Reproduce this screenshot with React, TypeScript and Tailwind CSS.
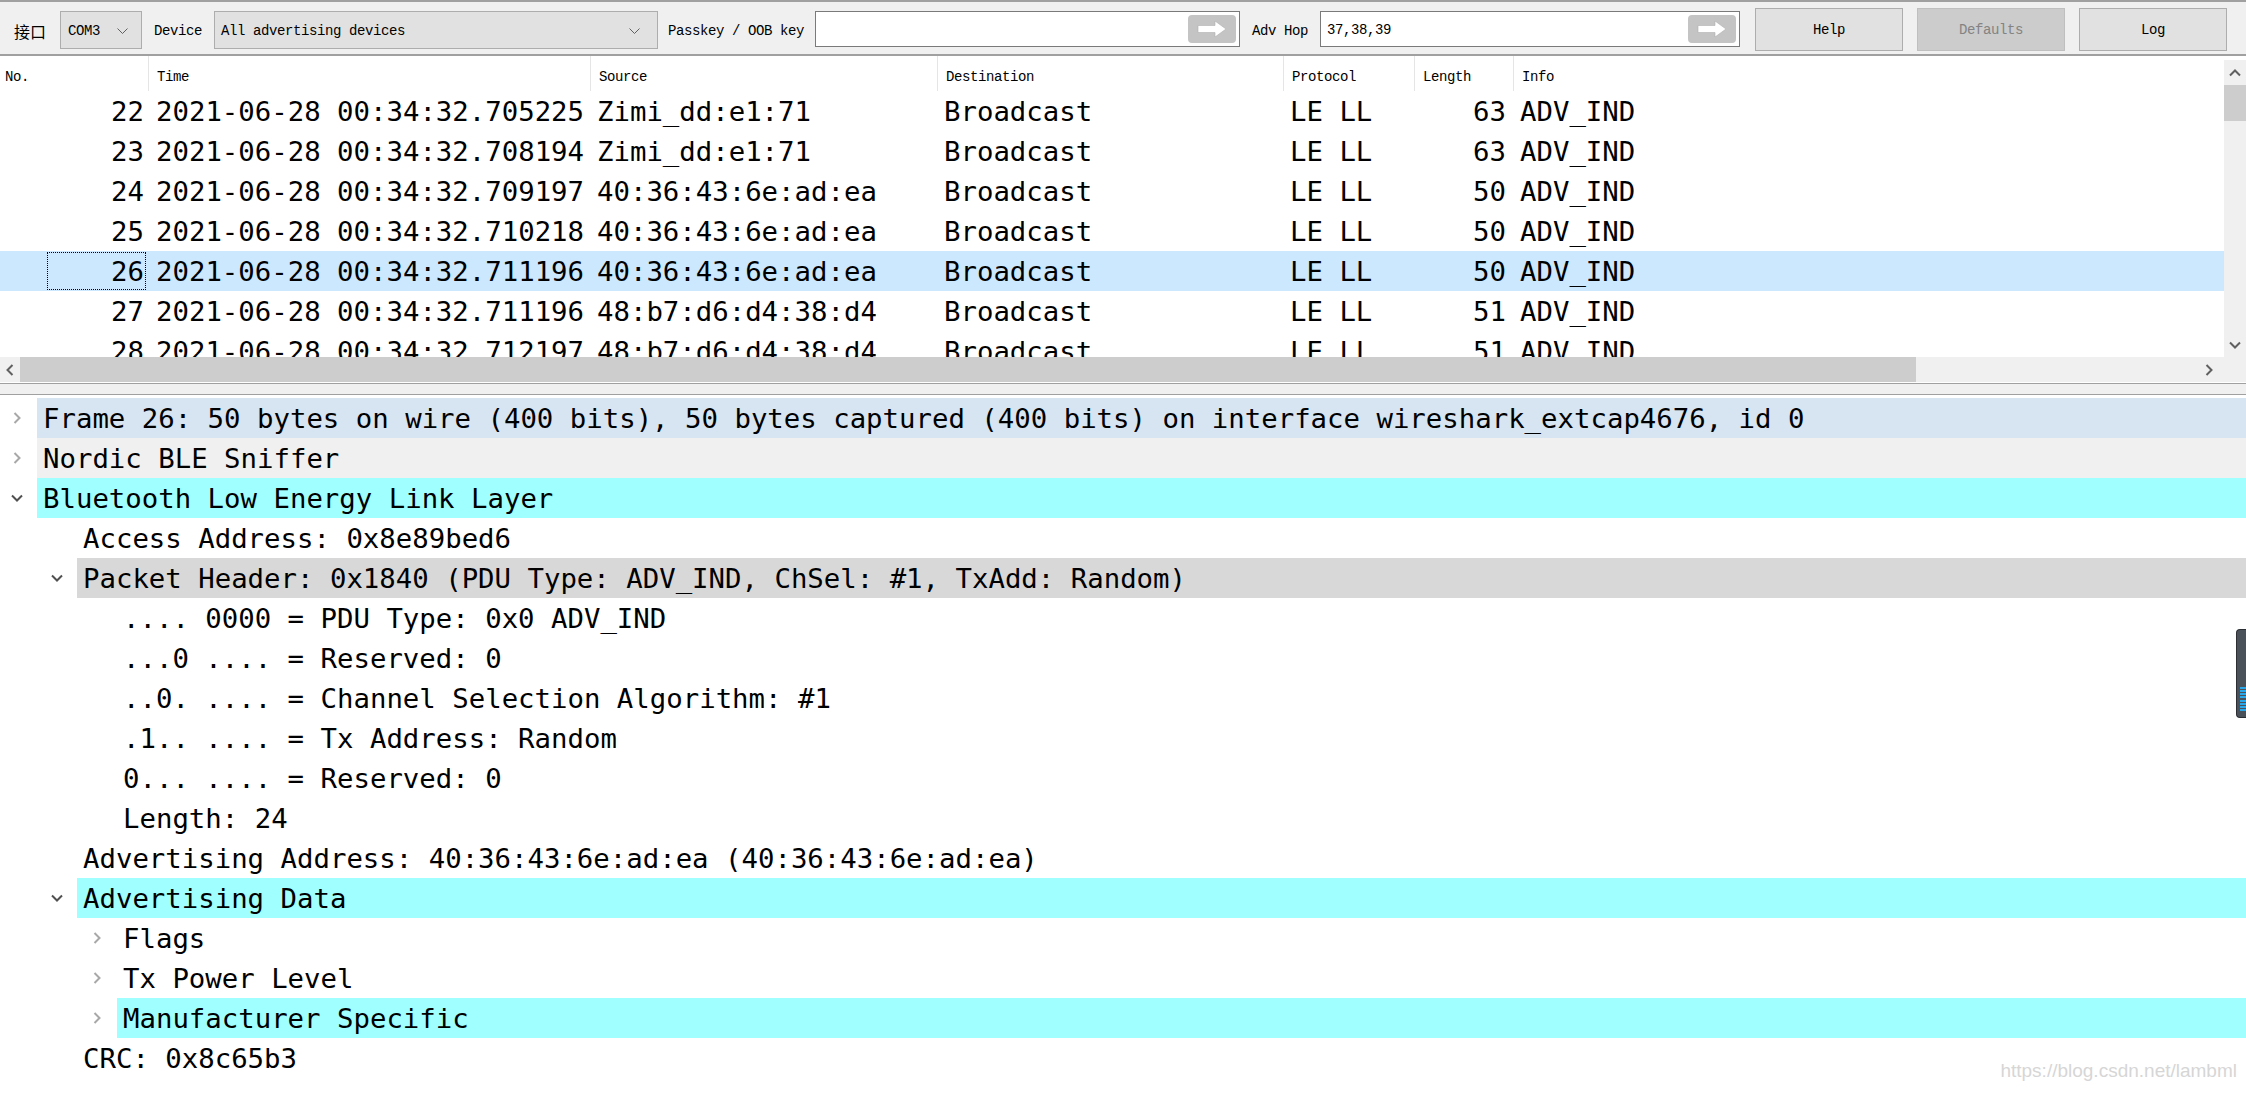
import React from 'react'

type Pkt = { no: number; time: string; src: string; len: number }

const packets: Pkt[] = [
  { no: 22, time: '2021-06-28 00:34:32.705225', src: 'Zimi_dd:e1:71', len: 63 },
  { no: 23, time: '2021-06-28 00:34:32.708194', src: 'Zimi_dd:e1:71', len: 63 },
  { no: 24, time: '2021-06-28 00:34:32.709197', src: '40:36:43:6e:ad:ea', len: 50 },
  { no: 25, time: '2021-06-28 00:34:32.710218', src: '40:36:43:6e:ad:ea', len: 50 },
  { no: 26, time: '2021-06-28 00:34:32.711196', src: '40:36:43:6e:ad:ea', len: 50 },
  { no: 27, time: '2021-06-28 00:34:32.711196', src: '48:b7:d6:d4:38:d4', len: 51 },
  { no: 28, time: '2021-06-28 00:34:32.712197', src: '48:b7:d6:d4:38:d4', len: 51 },
]

type TreeRow = { level: 0 | 1 | 2; text: string; chevron?: 'open' | 'closed'; bg?: string }

const CYAN = 'bg-[#a0ffff]'

const tree: TreeRow[] = [
  { level: 0, text: 'Frame 26: 50 bytes on wire (400 bits), 50 bytes captured (400 bits) on interface wireshark_extcap4676, id 0', chevron: 'closed', bg: 'bg-[#d7e4f1]' },
  { level: 0, text: 'Nordic BLE Sniffer', chevron: 'closed', bg: 'bg-[#f0f0f0]' },
  { level: 0, text: 'Bluetooth Low Energy Link Layer', chevron: 'open', bg: CYAN },
  { level: 1, text: 'Access Address: 0x8e89bed6' },
  { level: 1, text: 'Packet Header: 0x1840 (PDU Type: ADV_IND, ChSel: #1, TxAdd: Random)', chevron: 'open', bg: 'bg-[#d8d8d8]' },
  { level: 2, text: '.... 0000 = PDU Type: 0x0 ADV_IND' },
  { level: 2, text: '...0 .... = Reserved: 0' },
  { level: 2, text: '..0. .... = Channel Selection Algorithm: #1' },
  { level: 2, text: '.1.. .... = Tx Address: Random' },
  { level: 2, text: '0... .... = Reserved: 0' },
  { level: 2, text: 'Length: 24' },
  { level: 1, text: 'Advertising Address: 40:36:43:6e:ad:ea (40:36:43:6e:ad:ea)' },
  { level: 1, text: 'Advertising Data', chevron: 'open', bg: CYAN },
  { level: 2, text: 'Flags', chevron: 'closed' },
  { level: 2, text: 'Tx Power Level', chevron: 'closed' },
  { level: 2, text: 'Manufacturer Specific', chevron: 'closed', bg: CYAN },
  { level: 1, text: 'CRC: 0x8c65b3' },
]

const indent = ['w-0', 'w-[40px]', 'w-[80px]']

const columns = [
  { label: 'No.', w: 'w-[148px]' },
  { label: 'Time', w: 'w-[442px]' },
  { label: 'Source', w: 'w-[347px]' },
  { label: 'Destination', w: 'w-[346px]' },
  { label: 'Protocol', w: 'w-[131px]' },
  { label: 'Length', w: 'w-[99px]' },
  { label: 'Info', w: 'flex-1' },
]

function Chevron({ dir, className }: { dir: 'up' | 'down' | 'left' | 'right'; className?: string }) {
  const pts = {
    up: '2,9.5 7,4.5 12,9.5',
    down: '2,4.5 7,9.5 12,4.5',
    left: '9.5,2 4.5,7 9.5,12',
    right: '4.5,2 9.5,7 4.5,12',
  }[dir]
  return (
    <svg viewBox="0 0 14 14" className={className}>
      <polyline points={pts} fill="none" stroke="currentColor" strokeWidth={2} />
    </svg>
  )
}

function ComboArrow() {
  return (
    <svg viewBox="0 0 11 6" className="h-[6px] w-[11px] text-[#606060]">
      <polyline points="0.5,0.5 5.5,5.5 10.5,0.5" fill="none" stroke="currentColor" strokeWidth={1} />
    </svg>
  )
}

function GoButton() {
  return (
    <svg viewBox="0 0 48 28" className="h-[28px] w-[48px]">
      <rect x="0" y="0" width="48" height="28" rx="4" fill="#c4c4c4" />
      <path d="M10 10.5 H27 V6 L38 14 L27 22 V17.5 H10 Z" fill="#ffffff" stroke="#b0b0b0" strokeWidth={0.6} />
    </svg>
  )
}

function Toolbar() {
  const label = 'mt-[10px] flex h-[38px] items-center text-black'
  return (
    <div className="flex h-[56px] shrink-0 items-start border-y-2 border-[#a0a0a0] bg-[#f0f0f0] font-['Liberation_Mono','Noto_Sans_CJK_SC',monospace] text-[14px] tracking-[-0.4px]">
      <div className={`${label} ml-[14px] font-['Noto_Sans_CJK_SC',sans-serif] text-[16px] tracking-normal`}>接口</div>
      <div className="ml-[14px] mt-[9px] flex h-[38px] w-[82px] items-center justify-between border border-[#adadad] bg-[#e1e1e1] pl-[7px] pr-[13px] pt-[2px]">
        <span>COM3</span>
        <ComboArrow />
      </div>
      <div className={`${label} ml-[12px]`}>Device</div>
      <div className="ml-[12px] mt-[9px] flex h-[38px] w-[444px] items-center justify-between border border-[#adadad] bg-[#e1e1e1] pl-[6px] pr-[17px] pt-[2px]">
        <span>All advertising devices</span>
        <ComboArrow />
      </div>
      <div className={`${label} ml-[10px]`}>Passkey / OOB key</div>
      <div className="ml-[11px] mt-[9px] flex h-[36px] w-[425px] items-center justify-end border border-[#7a7a7a] bg-white pr-[3px]">
        <GoButton />
      </div>
      <div className={`${label} ml-[12px]`}>Adv Hop</div>
      <div className="ml-[12px] mt-[9px] flex h-[36px] w-[420px] items-center justify-between border border-[#7a7a7a] bg-white pl-[6px] pr-[3px]">
        <span className="pt-[2px]">37,38,39</span>
        <GoButton />
      </div>
      <div className="ml-[15px] mt-[6px] flex h-[43px] w-[148px] items-center justify-center border border-[#adadad] bg-[#e1e1e1] pt-[2px]">Help</div>
      <div className="ml-[14px] mt-[6px] flex h-[43px] w-[148px] items-center justify-center border border-[#bfbfbf] bg-[#cccccc] pt-[2px] text-[#838383]">Defaults</div>
      <div className="ml-[14px] mt-[6px] flex h-[43px] w-[148px] items-center justify-center border border-[#adadad] bg-[#e1e1e1] pt-[2px]">Log</div>
    </div>
  )
}

function PacketList() {
  return (
    <div className="flex h-[301px] shrink-0 bg-white">
      <div className="flex min-w-0 flex-1 flex-col">
        <div className="flex h-[35px] shrink-0 font-['Liberation_Mono',monospace] text-[14px] tracking-[-0.4px] text-black">
          {columns.map((c, i) => (
            <div
              key={c.label}
              className={`${c.w} flex items-center pt-[7px] ${i === 0 ? 'pl-[5px]' : 'border-l border-[#e5e5e5] pl-[8px]'}`}
            >
              {c.label}
            </div>
          ))}
        </div>
        <div className="h-[266px] overflow-hidden font-['DejaVu_Sans_Mono',monospace] text-[27.35px] text-black">
          {packets.map((p) => {
            const selected = p.no === 26
            return (
              <div key={p.no} className={`flex h-[40px] items-center whitespace-pre ${selected ? 'bg-[#cce8ff]' : ''}`}>
                <div className="relative flex h-full w-[148px] items-center justify-end pr-[4px]">
                  {selected ? <span className="absolute bottom-[1px] left-[47px] right-[2px] top-[1px] border border-dotted border-black" /> : null}
                  {p.no}
                </div>
                <div className="w-[442px] pl-[8px]">{p.time}</div>
                <div className="w-[347px] pl-[7px]">{p.src}</div>
                <div className="w-[346px] pl-[7px]">Broadcast</div>
                <div className="w-[131px] pl-[7px]">LE LL</div>
                <div className="w-[99px] pr-[7px] text-right">{p.len}</div>
                <div className="flex-1 pl-[7px]">ADV_IND</div>
              </div>
            )
          })}
        </div>
      </div>
      <div className="flex w-[22px] shrink-0 flex-col pt-[4px]">
        <div className="flex flex-1 flex-col bg-[#f0f0f0] text-[#606060]">
          <div className="flex h-[25px] items-center justify-center">
            <Chevron dir="up" className="h-[14px] w-[14px]" />
          </div>
          <div className="h-[36px] bg-[#cdcdcd]" />
          <div className="flex-1" />
          <div className="flex h-[25px] items-center justify-center">
            <Chevron dir="down" className="h-[14px] w-[14px]" />
          </div>
        </div>
      </div>
    </div>
  )
}

function HScrollbar() {
  return (
    <div className="flex h-[25px] shrink-0 bg-[#f0f0f0] text-[#606060]">
      <div className="flex w-[20px] items-center justify-center">
        <Chevron dir="left" className="h-[14px] w-[14px]" />
      </div>
      <div className="w-[1896px] bg-[#cdcdcd]" />
      <div className="flex-1" />
      <div className="flex w-[26px] items-center justify-center pr-[4px]">
        <Chevron dir="right" className="h-[14px] w-[14px]" />
      </div>
      <div className="w-[22px]" />
    </div>
  )
}

function Details() {
  return (
    <div className="flex-1 bg-white font-['DejaVu_Sans_Mono',monospace] text-[27.35px] text-black">
      {tree.map((r, i) => (
        <div key={i} className="flex h-[40px]">
          <div className={`${indent[r.level]} shrink-0`} />
          <div className="flex w-[37px] shrink-0 items-center justify-center pr-[3px]">
            {r.chevron === 'closed' ? (
              <Chevron dir="right" className="h-[14px] w-[14px] text-[#a8a8a8]" />
            ) : r.chevron === 'open' ? (
              <Chevron dir="down" className="h-[14px] w-[14px] text-[#505050]" />
            ) : null}
          </div>
          <div className={`flex flex-1 items-center whitespace-pre pl-[6px] pt-[1px] ${r.bg ?? ''}`}>{r.text}</div>
        </div>
      ))}
    </div>
  )
}

export default function App() {
  return (
    <div className="relative flex h-[1094px] w-[2246px] flex-col overflow-hidden bg-white">
      <Toolbar />
      <PacketList />
      <HScrollbar />
      <div className="shrink-0 bg-white pb-[3px] pt-[1px]">
        <div className="h-[12px] border-y border-[#a0a0a0] bg-[#f0f0f0]" />
      </div>
      <Details />

      {/* floating meter widget at the right edge */}
      <div className="absolute right-0 top-[629px] flex h-[89px] w-[10px] flex-col justify-end rounded-l-[4px] border border-r-0 border-[#2b2f34] bg-[#4b5159] pb-[6px] pl-[3px]">
        <div className="flex h-[24px] flex-col justify-between">
          {Array.from({ length: 8 }).map((_, i) => (
            <span key={i} className="h-[2px] w-full bg-[#2aa7e8]" />
          ))}
        </div>
      </div>

      <div className="absolute bottom-[9px] right-[9px] font-['Liberation_Sans',Arial,sans-serif] text-[19px] text-[#d6d6d6]">
        https://blog.csdn.net/lambml
      </div>
    </div>
  )
}
